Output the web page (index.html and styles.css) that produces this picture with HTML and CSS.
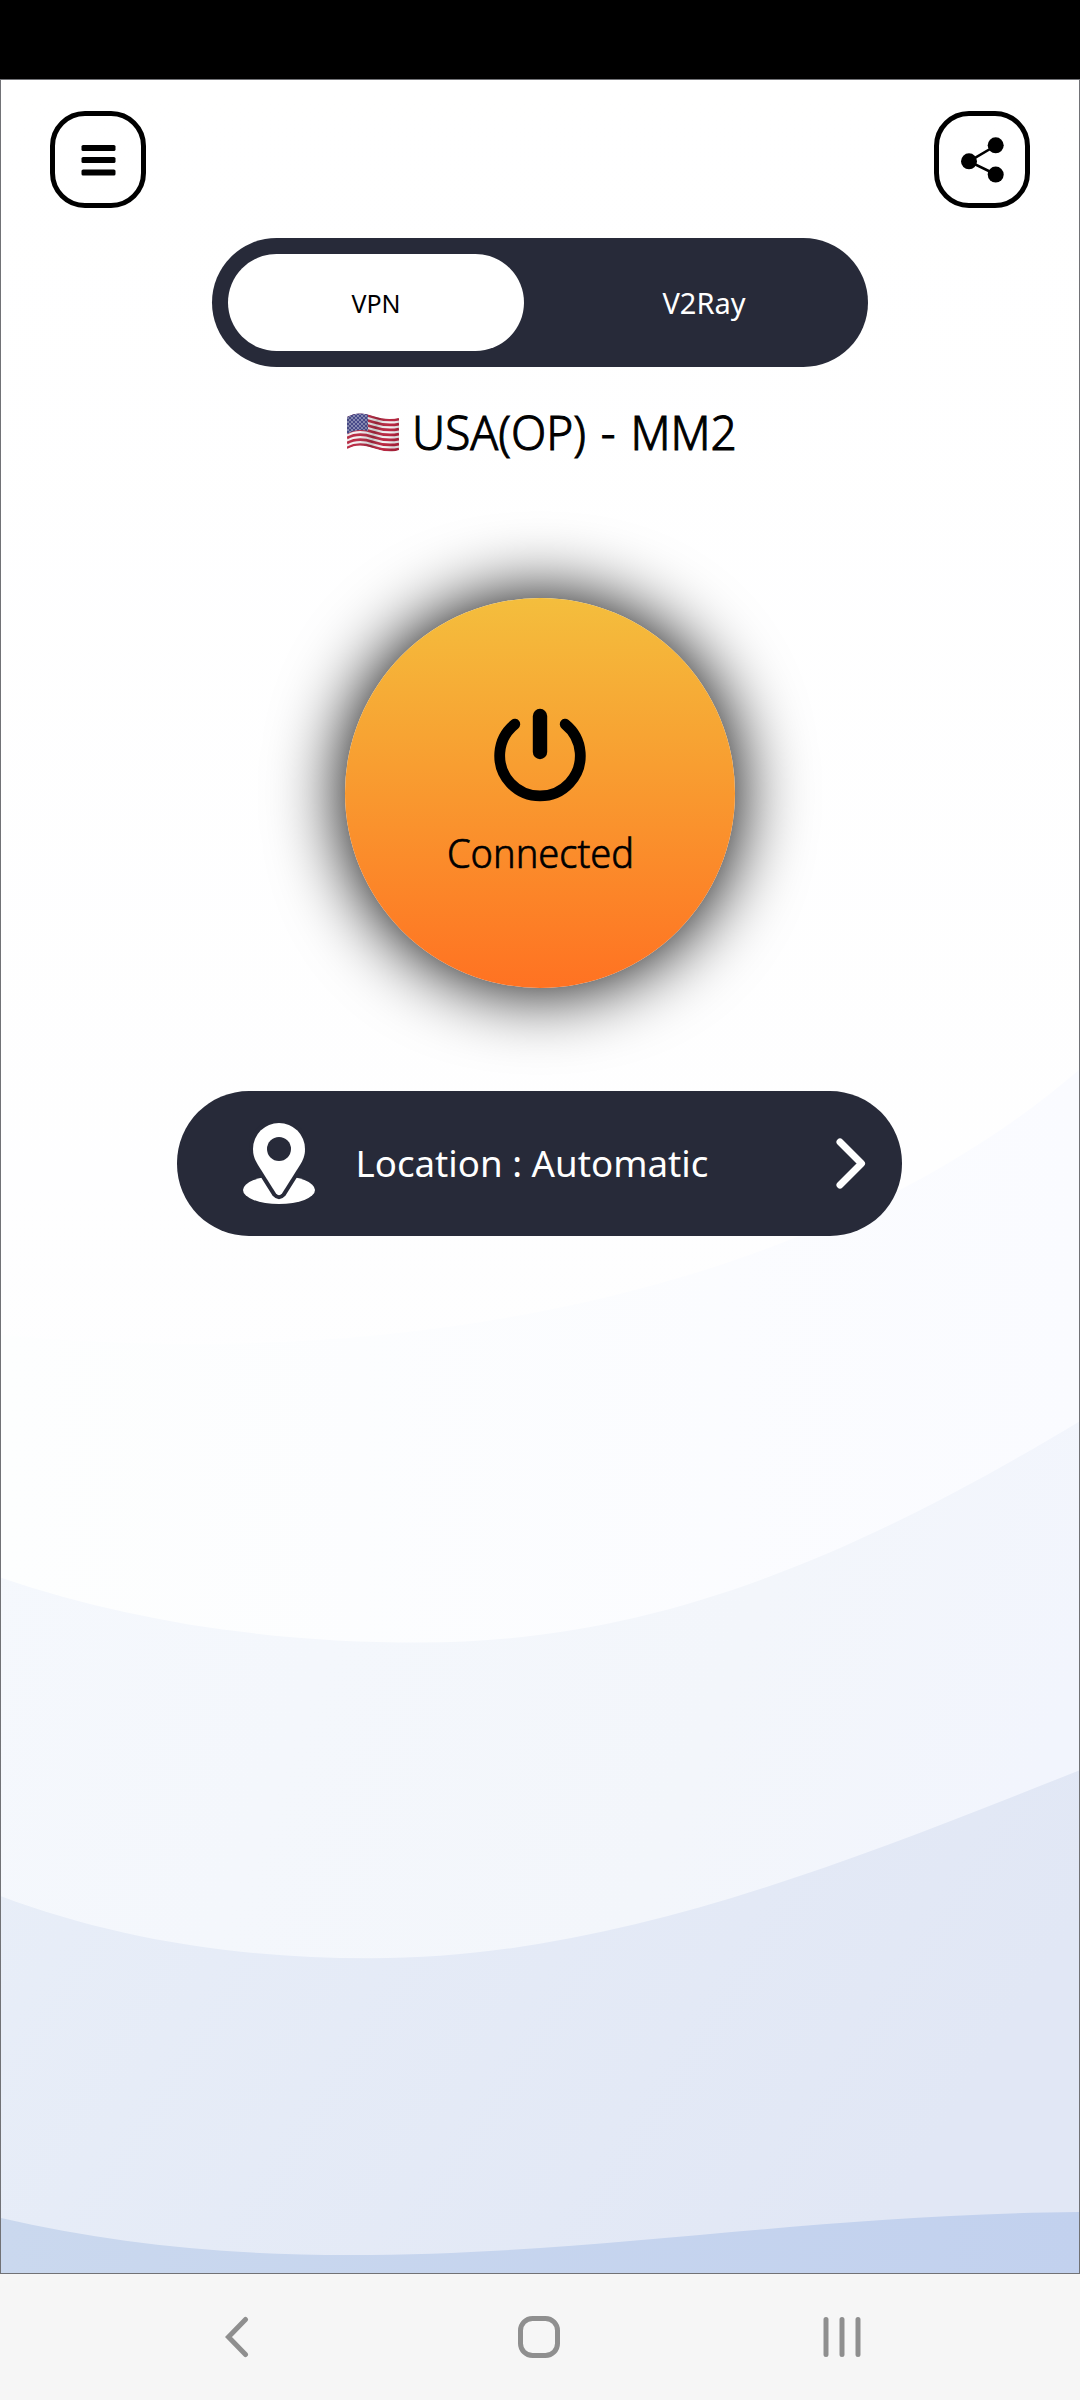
FILE: index.html
```html
<!DOCTYPE html>
<html lang="en">
<head>
<meta charset="utf-8">
<title>VPN</title>
<link rel="stylesheet" href="styles.css">
</head>
<body>
<div class="status-bar"></div>
<main class="app">
  <svg class="backdrop" viewBox="0 79 1080 2195" preserveAspectRatio="none" aria-hidden="true">
    <defs>
      <linearGradient id="w1" x1="0" y1="0" x2="1" y2="0"><stop offset="0" stop-color="#fdfefe"/><stop offset="1" stop-color="#fafbff"/></linearGradient>
      <linearGradient id="w2" x1="0" y1="0" x2="1" y2="0.3"><stop offset="0" stop-color="#f5f8fd"/><stop offset=".7" stop-color="#f3f6fb"/><stop offset="1" stop-color="#f2f5fd"/></linearGradient>
      <linearGradient id="w3" x1="0" y1="0" x2="1" y2="0.3"><stop offset="0" stop-color="#e8eef8"/><stop offset="1" stop-color="#e1e7f5"/></linearGradient>
      <linearGradient id="w4" x1="0" y1="0" x2="1" y2="0"><stop offset="0" stop-color="#cad8ee"/><stop offset="1" stop-color="#c2d1ee"/></linearGradient>
      <linearGradient id="sky" x1="0" y1="0" x2="0" y2="1"><stop offset="0" stop-color="#ffffff"/><stop offset="1" stop-color="#fdfdfe"/></linearGradient>
    </defs>
    <rect y="79" width="1080" height="2195" fill="url(#sky)"/>
    <path fill="url(#w1)" d="M0 1335C360 1370 800 1310 1080 1070V2274H0Z"/>
    <path fill="url(#w2)" d="M0 1578C130 1622 270 1643 420 1643C650 1643 850 1560 1080 1422V2274H0Z"/>
    <path fill="url(#w3)" d="M0 1897C110 1938 230 1959 370 1959C600 1959 820 1875 1080 1771V2274H0Z"/>
    <path fill="url(#w4)" d="M0 2219C110 2244 220 2256 350 2256C600 2256 800 2216 1080 2213V2274H0Z"/>
  </svg>

  <header class="top">
    <button class="square" aria-label="Menu">
      <svg width="96" height="97" viewBox="0 0 96 97"><g fill="#000"><rect x="31.5" y="34" width="34" height="6" rx="1.6"/><rect x="31.5" y="46" width="34" height="6" rx="1.6"/><rect x="31.5" y="58.5" width="34" height="6" rx="1.6"/></g></svg>
    </button>
    <button class="square" aria-label="Share">
      <svg width="96" height="97" viewBox="0 0 96 97"><path d="M62 34.5 35 50.500 62 63.500" fill="none" stroke="#000" stroke-width="2.600"/><circle cx="35" cy="50.300" r="8"/><circle cx="61.700" cy="34.300" r="8"/><circle cx="61.700" cy="63.600" r="8"/></svg>
    </button>
  </header>

  <div class="toggle">
    <button class="tab tab-on"><span>VPN</span></button>
    <button class="tab"><span>V2Ray</span></button>
  </div>

  <h1 class="server">
    <svg class="flag" width="52" height="40" viewBox="0 0 52 40" aria-label="US flag">
      <defs>
        <clipPath id="flag"><path d="M0 4C9-1 17 0 26 3S43 7 52 5V37C43 40 35 38 26 35S9 31 0 36Z"/></clipPath>
        <linearGradient id="fold" x1="0" x2="1" y1="0" y2="0.2"><stop offset="0" stop-color="#777" stop-opacity=".2"/><stop offset=".25" stop-color="#fff" stop-opacity=".08"/><stop offset=".6" stop-color="#333" stop-opacity=".25"/><stop offset=".85" stop-color="#fff" stop-opacity=".05"/><stop offset="1" stop-color="#444" stop-opacity=".15"/></linearGradient>
        <pattern id="stars" width="4" height="4" patternUnits="userSpaceOnUse"><circle cx="1" cy="1" r=".65" fill="#fff"/><circle cx="3" cy="3" r=".65" fill="#fff"/></pattern>
      </defs>
      <g clip-path="url(#flag)">
        <rect width="52" height="40" fill="#f4f1f3"/>
        <g fill="none" stroke="#b51a36" stroke-width="2.700">
          <path d="M0 5C9 0 17 1 26 4S43 8 52 6"/><path d="M0 10C9 5 17 6 26 9S43 13 52 11"/><path d="M0 15C9 10 17 11 26 14S43 18 52 16"/><path d="M0 20C9 15 17 16 26 19S43 23 52 21"/><path d="M0 25C9 20 17 21 26 24S43 28 52 26"/><path d="M0 30C9 25 17 26 26 29S43 33 52 31"/><path d="M0 35C9 30 17 31 26 34S43 38 52 36"/>
        </g>
        <path fill="#34387f" d="M0 0H21V18C14 16 7 17 0 21Z"/>
        <path fill="url(#stars)" d="M0 0H21V18C14 16 7 17 0 21Z"/>
        <rect width="52" height="40" fill="url(#fold)"/>
      </g>
    </svg>
    <span class="server-name">USA(OP) - MM2</span>
  </h1>

  <button class="power">
    <svg width="94" height="96" viewBox="0 0 94 96" aria-hidden="true"><g fill="none" stroke="#000" stroke-linecap="round"><path stroke-width="10.800" d="M21.800 17.200A40.300 40.300 0 1 0 72.200 17.200"/><path stroke-width="14.400" d="M47 9V45"/></g></svg>
    <span>Connected</span>
  </button>

  <button class="location">
    <svg width="74" height="84" viewBox="0 0 74 84" aria-hidden="true"><ellipse cx="37" cy="68" rx="36" ry="14" fill="#fff"/><path d="M37 1A26 26 0 0 0 11 27C11 34 13 38 16 43L34 71.500Q37 75 40 71.500L58 43C61 38 63 34 63 27A26 26 0 0 0 37 1Z" fill="#fff" stroke="#272a39" stroke-width="8" paint-order="stroke"/><circle cx="37" cy="27" r="12" fill="#272a39"/></svg>
    <span>Location : Automatic</span>
    <svg class="chevron" width="30" height="52" viewBox="0 0 30 52" aria-hidden="true"><path d="M4 4 25.500 25.500 4 47" fill="none" stroke="#fff" stroke-width="7" stroke-linecap="round" stroke-linejoin="round"/></svg>
  </button>
</main>

<nav class="nav-bar">
  <svg width="24" height="42" viewBox="0 0 24 42"><path d="M20.500 3.500 3.500 21 20.500 38.500" fill="none" stroke="#8f8f8f" stroke-width="5" stroke-linecap="round"/></svg>
  <svg class="home" width="42" height="42" viewBox="0 0 42 42"><rect x="2.500" y="2.500" width="37" height="37" rx="12" fill="none" stroke="#8f8f8f" stroke-width="5"/></svg>
  <svg width="38" height="42" viewBox="0 0 38 42"><path d="M3 3.500V38.500M19 3.500V38.500M35 3.500V38.500" fill="none" stroke="#8f8f8f" stroke-width="5" stroke-linecap="round"/></svg>
</nav>
</body>
</html>
```
FILE: styles.css
```css
* { box-sizing: border-box; }

body {
  margin: 0;
  width: 1080px;
  height: 2400px;
  display: flex;
  flex-direction: column;
  overflow: hidden;
  font-family: "Noto Sans", sans-serif;
  background: #f6f6f6;
}

button {
  margin: 0;
  padding: 0;
  border: 0;
  background: none;
  font: inherit;
  color: inherit;
}

svg { display: block; flex: none; }
span { white-space: nowrap; }

.status-bar { height: 79px; background: #000; }

.app {
  position: relative;
  isolation: isolate;
  height: 2195px;
  border: 1px solid #717276;
  display: flex;
  flex-direction: column;
  align-items: center;
}

.backdrop {
  position: absolute;
  inset: 0;
  width: 100%;
  height: 100%;
  z-index: -1;
}

.top {
  width: 100%;
  padding: 31px 49px 0;
  display: flex;
  justify-content: space-between;
}

.square {
  width: 96px;
  height: 97px;
  border: 5px solid #000;
  border-radius: 35px;
  display: flex;
  align-items: center;
  justify-content: center;
}

.toggle {
  margin-top: 30px;
  width: 656px;
  height: 129px;
  padding: 16px;
  border-radius: 65px;
  background: #272a39;
  display: flex;
  gap: 32px;
  color: #fff;
  font-size: 29px;
}

.tab {
  width: 296px;
  border-radius: 49px;
  display: flex;
  align-items: center;
  justify-content: center;
}

.tab-on {
  background: #fff;
  color: #000;
  font-size: 25px;
}

.server {
  margin: 29px 0 0;
  height: 72px;
  width: 386px;
  display: flex;
  align-items: center;
  gap: 13px;
  font-size: 48px;
  font-weight: 300;
  line-height: 72px;
}

.flag { margin-top: 2px; }

.server-name {
  word-spacing: 3px;
  transform: scaleX(0.957);
  transform-origin: left center;
  -webkit-text-stroke: 1px #000;
}

.power {
  margin-top: 130px;
  width: 390px;
  height: 390px;
  border-radius: 50%;
  background: linear-gradient(#f4be3d, #f7a433 35%, #ff7222);
  box-shadow: 0 0 72px 2px #000;
  display: flex;
  flex-direction: column;
  align-items: center;
  padding-top: 109px;
  font-size: 40px;
  font-weight: 300;
  line-height: 54px;
}

.power span {
  margin-top: 23px;
  transform: scaleX(0.95);
  -webkit-text-stroke: 0.7px #000;
}

.location {
  margin: 103px 2px 0 0;
  width: 725px;
  height: 145px;
  border-radius: 72px;
  background: #272a39;
  color: #fff;
  display: flex;
  align-items: center;
  padding: 0 36px 0 65px;
  font-size: 36.7px;
}

.location span { margin: -2px 0 0 40px; }
.chevron { margin-left: auto; }

.nav-bar {
  height: 126px;
  background: #f6f6f6;
  padding: 0 219px 0 225px;
  display: flex;
  align-items: center;
  justify-content: space-between;
}

.home { margin-left: 5px; }
```
